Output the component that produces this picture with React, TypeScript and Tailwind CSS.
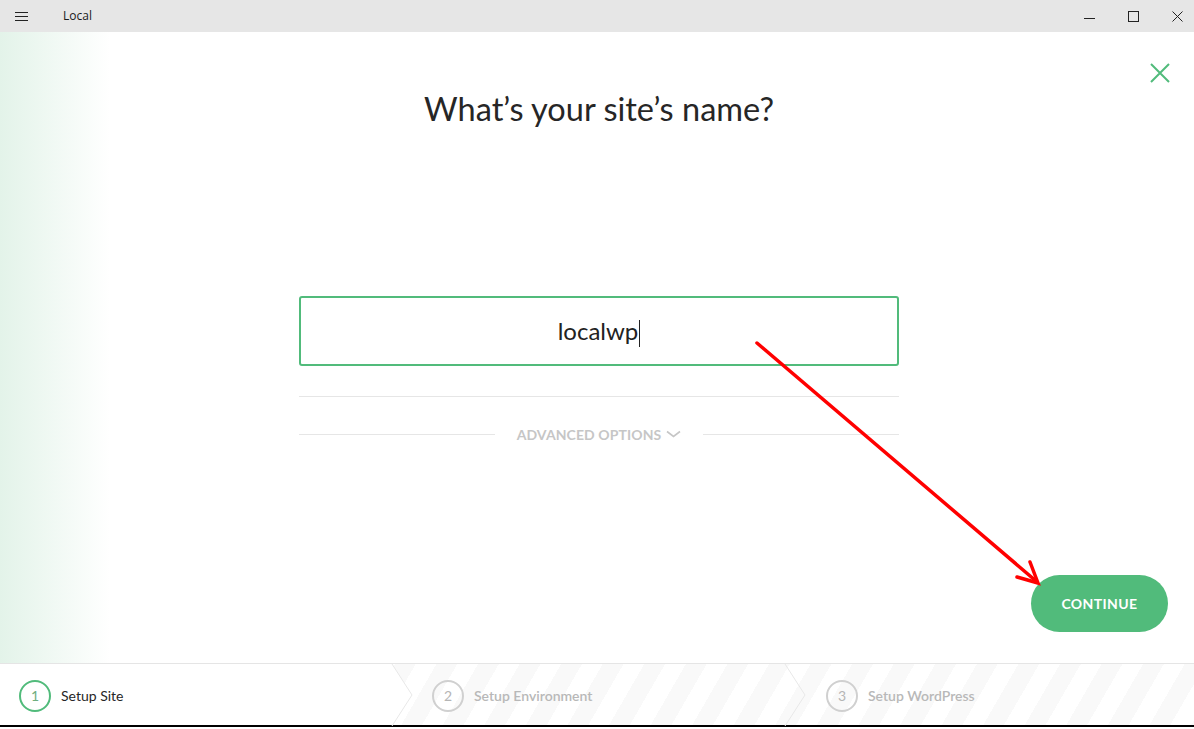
import React from 'react';

const steps = [
  { n: 1, label: 'Setup Site', active: true, cls: 'w-[412px] pl-[19px]' },
  { n: 2, label: 'Setup Environment', active: false, cls: 'w-[393px] pl-[20px]' },
  { n: 3, label: 'Setup WordPress', active: false, cls: 'flex-1 pl-[21px]' },
];

function TitleBar() {
  return (
    <div className="h-[32px] bg-[#e6e6e6] flex items-center text-[#1a1a1a] select-none">
      <svg width="13" height="10" viewBox="0 0 13 10" className="ml-[15px]">
        <path d="M0 1.5h13M0 5.5h13M0 9.5h13" stroke="#222" strokeWidth="1" />
      </svg>
      <span className="ml-[35px] text-[12px] font-['Open_Sans',sans-serif] leading-none">Local</span>
      <div className="flex-1" />
      <div className="flex items-center h-full mr-[-5px]">
        <div className="w-[44px] h-full flex items-center justify-center">
          <svg width="11" height="11" viewBox="0 0 11 11"><path d="M0 7.5h11" stroke="#222" strokeWidth="1" /></svg>
        </div>
        <div className="w-[44px] h-full flex items-center justify-center">
          <svg width="11" height="11" viewBox="0 0 11 11"><rect x="0.5" y="0.5" width="10" height="10" fill="none" stroke="#222" strokeWidth="1" /></svg>
        </div>
        <div className="w-[44px] h-full flex items-center justify-center">
          <svg width="11" height="11" viewBox="0 0 11 11"><path d="M0.5 0.5l10 10M10.5 0.5l-10 10" stroke="#222" strokeWidth="1" /></svg>
        </div>
      </div>
    </div>
  );
}

function StepsBar() {
  return (
    <div className="relative h-[64px] border-t border-[#e5e5e5] border-b-2 border-b-black bg-[repeating-linear-gradient(120deg,#ffffff_0px,#ffffff_18px,#f9f9f9_18px,#f9f9f9_36px)] flex font-['Lato',sans-serif]">
      <div className="absolute left-0 top-0 bottom-0 w-[412px] bg-white [clip-path:polygon(0_0,392px_0,412px_50%,392px_100%,0_100%)]" />
      <svg className="absolute inset-0 pointer-events-none" width="1194" height="62">
        <polyline points="392,0 412,31 392,62" fill="none" stroke="#e8e8e8" strokeWidth="1" />
        <polyline points="785,0 805,31 785,62" fill="none" stroke="#e8e8e8" strokeWidth="1" />
      </svg>
      {steps.map((s) => (
        <div key={s.n} className={`relative flex items-center gap-[10px] pt-[2px] ${s.cls}`}>
          <div
            className={`w-[32px] h-[32px] rounded-full border-2 flex items-center justify-center text-[14px] ${
              s.active ? 'border-[#51bb7b] text-[#6fae7f]' : 'border-[#d0d0d0] text-[#b5b5b5]'
            }`}
          >
            {s.n}
          </div>
          <span className={`text-[14px] ${s.active ? 'text-[#262626]' : 'text-[#b8b8b8] font-semibold'}`}>{s.label}</span>
        </div>
      ))}
    </div>
  );
}

export default function App() {
  return (
    <div className="relative w-full h-[729px] overflow-hidden bg-white font-['Lato',sans-serif]">
      <TitleBar />

      <div className="h-[631px] flex flex-col bg-[linear-gradient(to_right,#e3f3e9,#ffffff_110px)]">
        <div className="flex justify-end pt-[31px] pr-[24px]">
          <svg width="20" height="20" viewBox="0 0 20 20">
            <path d="M1 1l18 18M19 1L1 19" stroke="#51bb7b" strokeWidth="2" />
          </svg>
        </div>

        <div className="pl-[4px] flex flex-col">
          <h1 className="mt-[8px] text-center text-[32.5px] leading-[36px] text-[#262626]">What’s your site’s name?</h1>

          <div className="mx-auto mt-[169px] w-[600px] h-[70px] border-2 border-[#51bb7b] rounded-[3px] flex items-center justify-center">
            <span className="text-[24px] text-[#222] leading-none">localwp</span>
            <span className="w-px h-[27px] bg-[#222] ml-px mt-[4px]" />
          </div>

          <div className="mx-auto mt-[30px] w-[600px] h-px bg-[#e6e6e6]" />

          <div className="mx-auto mt-[27px] w-[600px] h-[20px] flex items-center">
            <div className="flex-1 h-px bg-[#e6e6e6]" />
            <div className="flex items-center gap-[5px] px-[22px] text-[14px] font-bold text-[#c6c6c6] tracking-[0.1px]">
              <span>ADVANCED OPTIONS</span>
              <svg width="15" height="8" viewBox="0 0 15 8">
                <path d="M1 1.5l6.5 5 6.5-5" fill="none" stroke="#c6c6c6" strokeWidth="1.6" />
              </svg>
            </div>
            <div className="flex-1 h-px bg-[#e6e6e6]" />
          </div>
        </div>

        <div className="flex-1" />

        <div className="flex justify-end pr-[26px] pb-[31px]">
          <button className="w-[137px] h-[57px] rounded-full bg-[#51bb7b] text-white text-[14px] font-bold tracking-[0.4px]">
            CONTINUE
          </button>
        </div>
      </div>

      <StepsBar />

      {/* annotation arrow drawn over the page */}
      <svg className="absolute inset-0 pointer-events-none" width="1194" height="729">
        <line x1="757" y1="343" x2="1036" y2="581" stroke="#ff0000" strokeWidth="3.5" strokeLinecap="round" />
        <polyline points="1017,577 1038,583 1030,562" fill="none" stroke="#ff0000" strokeWidth="3.5" strokeLinecap="round" />
      </svg>
    </div>
  );
}
